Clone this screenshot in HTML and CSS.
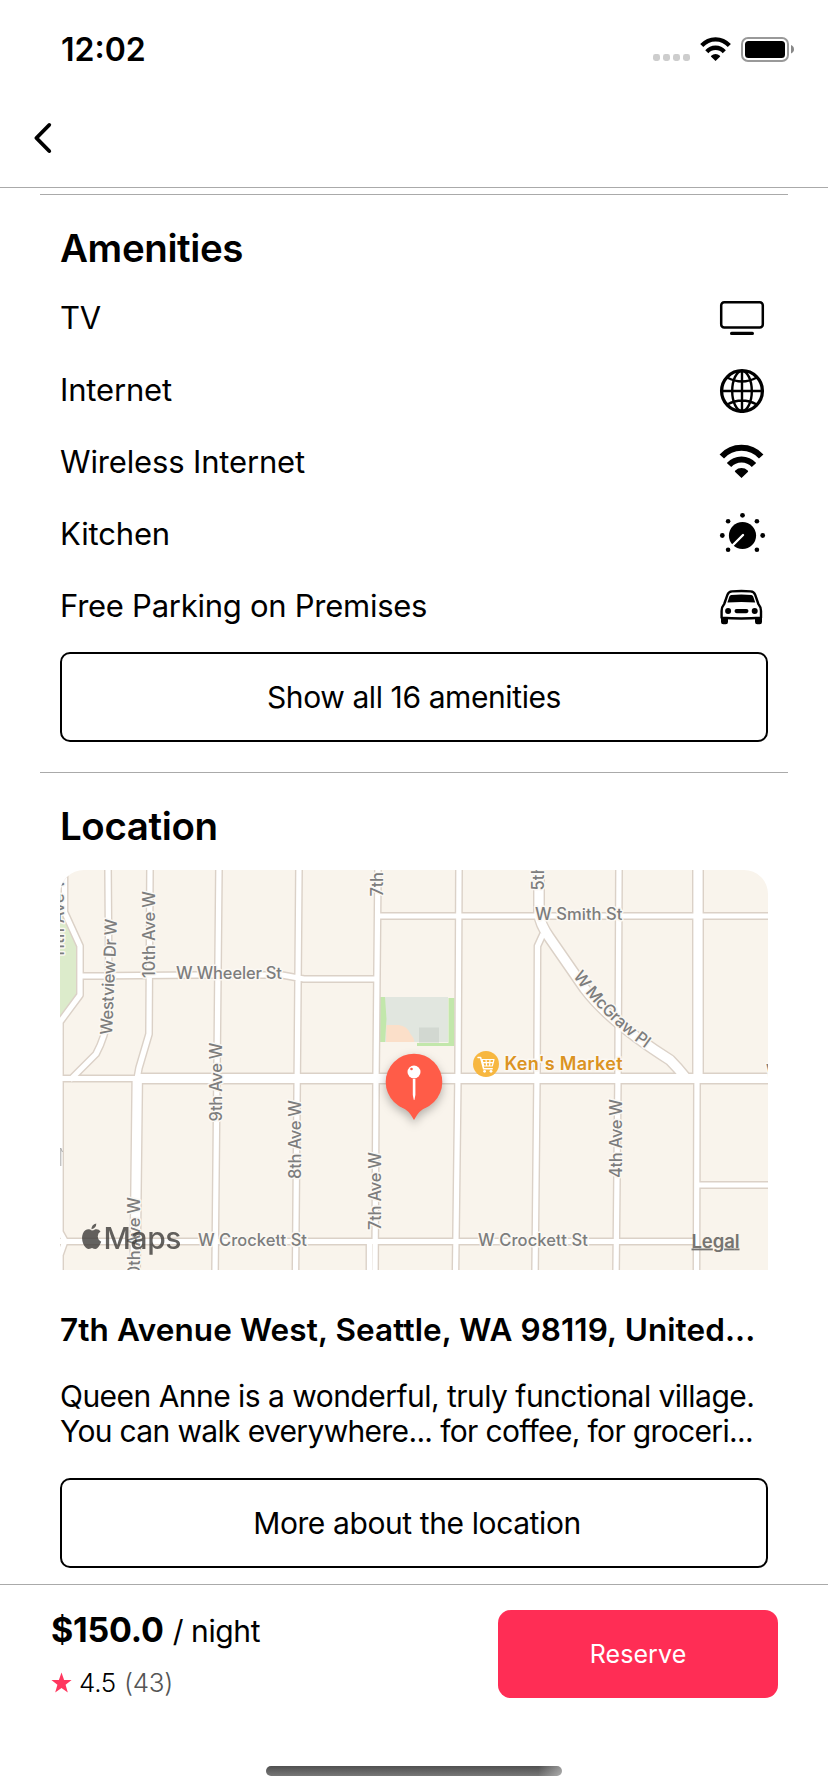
FILE: index.html
```html
<!DOCTYPE html>
<html lang="en">
<head>
<meta charset="utf-8">
<title>Listing</title>
<link rel="stylesheet" href="styles.css">
</head>
<body>
<div class="screen">
  <header class="header">
    <div class="status">
      <span class="clock">12:02</span>
      <svg class="status-icons" width="144" height="30" viewBox="652 34 144 30">
        <g fill="#cdcdcd">
          <rect x="653" y="54" width="7" height="7" rx="2.4"/><rect x="663" y="54" width="7" height="7" rx="2.4"/>
          <rect x="673" y="54" width="7" height="7" rx="2.4"/><rect x="683" y="54" width="7" height="7" rx="2.4"/>
        </g>
        <g transform="translate(699.1 31.6) scale(.7 .72)">
          <path d="M3.8 19.4A26.6 26.6 0 0 1 43.2 19.4M11 28A16.8 16.8 0 0 1 36 28" fill="none" stroke="#000" stroke-width="6"/>
          <path d="M23.5 41l-6.3-6.1q-.8-.8.1-1.5 2.6-2.4 6.2-2.4t6.2 2.4q.9.7.1 1.5z"/>
        </g>
        <rect x="742" y="38" width="46" height="23" rx="6" fill="none" stroke="#999" stroke-width="2"/>
        <rect x="745" y="41" width="40" height="17" rx="3.5"/>
        <path d="M791 45q3 1.2 3 4.3t-3 4.2z" fill="#888"/>
      </svg>
    </div>
    <nav class="nav">
      <svg width="20" height="32" viewBox="0 0 20 32"><path d="M17.2 3L4.4 16l12.8 13" fill="none" stroke="#000" stroke-width="3.9" stroke-linecap="round" stroke-linejoin="round"/></svg>
    </nav>
  </header>

  <main class="content">
    <section class="section">
      <h2 class="title">Amenities</h2>
      <ul class="amenities">
        <li class="amenity"><span>TV</span>
          <svg class="icon" viewBox="0 0 48 48"><rect x="3.2" y="9.2" width="41.6" height="25.4" rx="3" fill="none" stroke="#000" stroke-width="2.5"/><rect x="12" y="38.8" width="24" height="3.2" rx="1.6"/></svg></li>
        <li class="amenity"><span>Internet</span>
          <svg class="icon" viewBox="0 0 48 48"><g fill="none" stroke="#000" stroke-width="2.400"><circle cx="24" cy="26" r="20.4" stroke-width="3.300"/><ellipse cx="24" cy="26" rx="9.8" ry="20"/><path d="M24 6v40M4 26h40M9.2 12.5Q24 20.5 38.8 12.5M9.2 39.5Q24 31.5 38.8 39.5"/></g></svg></li>
        <li class="amenity"><span>Wireless Internet</span>
          <svg class="icon" viewBox="0 0 48 48"><path d="M3.8 19.4A26.6 26.6 0 0 1 43.2 19.4M11 28A16.8 16.8 0 0 1 36 28" fill="none" stroke="#000" stroke-width="6"/><path d="M23.5 41l-6.3-6.1q-.8-.8.1-1.5 2.6-2.4 6.2-2.4t6.2 2.4q.9.7.1 1.5z"/></svg></li>
        <li class="amenity"><span>Kitchen</span>
          <svg class="icon" viewBox="0 0 48 48"><circle cx="24.5" cy="26.5" r="13.6"/><path d="M25 26L14 37" stroke="#fff" stroke-width="2.4" stroke-linecap="round"/><circle cx="24.5" cy="6.3" r="2.4"/><circle cx="10.1" cy="12.3" r="2.3"/><circle cx="38.9" cy="12.3" r="2.3"/><circle cx="4.3" cy="26.5" r="2.4"/><circle cx="44.7" cy="26.5" r="2.4"/><circle cx="10.1" cy="40.8" r="2.3"/><circle cx="38.9" cy="40.8" r="2.3"/></svg></li>
        <li class="amenity"><span class="parking">Free Parking on Premises</span>
          <svg class="icon" viewBox="0 0 48 48"><path d="M3.6 36.8V30q0-4 2.6-7l3.2-9.2q1.1-3.2 4.6-3.4 9.5-.7 18.6 0 3.5.2 4.6 3.4l3.2 9.2q2.6 3 2.6 7v6.8q-19.7 1.4-39.4 0z" fill="none" stroke="#000" stroke-width="2.4" stroke-linejoin="round"/><path d="M13.3 14q10-1 20 0 1.4.1 1.9 1.5l2 6q-13.9-1-27.8 0l2-6q.5-1.4 1.9-1.5z"/><circle cx="10.1" cy="30" r="3"/><circle cx="36.7" cy="30" r="3"/><rect x="16.5" y="27.9" width="14" height="4.3" rx="2.1"/><path d="M3 36h7v5q0 2.3-2.3 2.3H5.3Q3 43.3 3 41zM37 36h7v5q0 2.3-2.3 2.3h-2.4q-2.3 0-2.3-2.3z"/></svg></li>
      </ul>
      <button class="outline-button">Show all 16 amenities</button>
    </section>

    <section class="section">
      <h2 class="title">Location</h2>
      <svg class="map" width="708" height="400" viewBox="60 870 708 400">
        <defs>
          <g id="roads" fill="none" stroke-linejoin="round">
            <path d="M64.5 865V912L80 946V995L60 1022M80 976L200 975 282 975 304 979H377M108 865L109 1000Q109 1030 96 1054L70 1080M150 865L149 1034 139 1068 137 1079M219 865L215 1275M299 865L295.5 1275M378 865L376 1078 375 1275M369.5 1242V1275M459 865L458 1075 455.5 1275M543 934L537.5 946 537 1075 535 1275M619 865L618 1075 616 1275M697 1078L696.5 1275M378 916H775M60 1078.5H140M60 1241.5H697M697 1185H775M60 1020V1232L65 1241 60 1255V1275"/>
          </g>
          <g id="avenues" fill="none" stroke-linejoin="round">
            <path d="M137.3 1078L135 1275M138 1078.5H775M539 865V914Q540 924 549 937L585 989Q610 1022 670 1060 678 1068 686 1078M698 865V1078"/>
          </g>
          <path id="mcgraw" d="M573 976Q602 1018 649 1051"/>
        </defs>
        <rect x="60" y="870" width="708" height="400" fill="#f9f4ec"/>
        <path d="M60 905L76 945V995L60 1016z" fill="#dcebcb"/>
        <rect x="380" y="997" width="68" height="45" fill="#e1e6df"/>
        <path d="M380 997h5l1.5 22-1.5 23h-5zM448.5 998h6v48H417v-3h31.5z" fill="#c2e7ab"/>
        <path d="M386.5 1025h12q9 1 12 9 3 3 4 8h-28.5z" fill="#fbdfc9"/>
        <rect x="419" y="1027.5" width="20" height="15" fill="#d2d8d1"/>
        <use href="#roads" stroke="#dbd1c7" stroke-width="8"/>
        <use href="#avenues" stroke="#dbd1c7" stroke-width="12"/>
        <use href="#roads" stroke="#fff" stroke-width="5.2"/>
        <use href="#avenues" stroke="#fff" stroke-width="9.2"/>

        <g class="street">
          <text x="176" y="979" textLength="106">W Wheeler St</text>
          <text x="535" y="920" textLength="87.5">W Smith St</text>
          <text x="198" y="1246" textLength="109">W Crockett St</text>
          <text x="478" y="1246" textLength="110">W Crockett St</text>
          <text x="766" y="1077">W</text>
          <text transform="translate(64 958) rotate(-90)" textLength="86">11th Ave W</text>
          <text transform="translate(112 1035) rotate(-87.5)" textLength="116">Westview Dr W</text>
          <text transform="translate(155 978) rotate(-90)" textLength="87">10th Ave W</text>
          <text transform="translate(221.5 1121.5) rotate(-90)" textLength="79">9th Ave W</text>
          <text transform="translate(300.5 1179) rotate(-90)" textLength="79">8th Ave W</text>
          <text transform="translate(380.5 1230) rotate(-90)" textLength="78">7th Ave W</text>
          <text transform="translate(383 896.5) rotate(-90)" textLength="78">7th Ave W</text>
          <text transform="translate(543.5 890.5) rotate(-90)" textLength="82">5th Ave W</text>
          <text transform="translate(621.5 1178) rotate(-90)" textLength="79">4th Ave W</text>
          <text transform="translate(140 1283) rotate(-90)" textLength="86">10th Ave W</text>
          <text><textPath href="#mcgraw" textLength="103">W McGraw Pl</textPath></text>
        </g>
        <path d="M60.8 1148V1166M60.5 1148l2 4" stroke="#aaa" fill="none"/>

        <circle cx="486" cy="1064" r="13" fill="#f7b740"/>
        <g fill="none" stroke="#fff" stroke-width="1.5" stroke-linecap="round" stroke-linejoin="round">
          <path d="M478 1057.5h2.6l3 11.2h8.6"/>
          <path d="M482 1059.5h12l-1.7 6.5h-8.6zM482.8 1062.6h10.6M486 1059.5l.6 6.5M490 1059.5l-.4 6.5" stroke-width="1.2"/>
        </g>
        <circle cx="484.6" cy="1071.3" r="1.4" fill="#fff"/><circle cx="491" cy="1071.3" r="1.4" fill="#fff"/>
        <text class="poi" x="504.500" y="1070" textLength="118">Ken's Market</text>

        <g class="brand">
          <path d="M91.8 1230.500q1.700 0 3.500-1.200 3.300-.8 5.200 2.300-3 1.800-2.700 5.200.4 3.600 3.400 4.900-2.800 7-5.800 7.300-1.300.1-3.400-1-2.200 1-3.700 1-2.700-.3-5-5-2.300-5.500-.4-10.600 2.200-4.500 6.300-4.100 1.600.5 2.600 1.200zM91.400 1229.300q0-4.700 4.900-5.900.1 4.800-4.900 5.900z"/>
          <text x="103.500" y="1249" textLength="78">Maps</text>
        </g>
        <text class="legal" x="691.500" y="1247.500" textLength="48">Legal</text>

        <g class="pin">
          <path d="M400 1106Q409 1110 414 1120 419 1110 428 1106z"/>
          <circle cx="414" cy="1082" r="28.3"/>
        </g>
        <circle cx="414" cy="1072" r="6.5" fill="#fff"/>
        <circle cx="411.5" cy="1069" r="1.3" fill="#ff5c48"/>
        <path d="M412.8 1079h2.6v16l-1 5h-.6l-1-5z" fill="#fff"/>
      </svg>
      <h3 class="address">7th Avenue West, Seattle, WA 98119, United...</h3>
      <p class="about"><span>Queen Anne is a wonderful, truly functional village.</span><br><span class="about-last">You can walk everywhere... for coffee, for groceri...</span></p>
      <button class="outline-button more">More about the location</button>
    </section>
  </main>

  <footer class="footer">
    <div class="booking">
      <div>
        <div class="price"><strong>$150.0</strong><span>/ night</span></div>
        <div class="rating">
          <svg width="21" height="22" viewBox="0 0 21 22"><path d="M10.5.5l2.600 7.400 7.500.1-6 4.700 2.200 7.900-6.300-4.600-6.300 4.600 2.200-7.900-6-4.700 7.500-.1z" fill="#ff375f"/></svg>
          <span class="score">4.5</span><span class="count">(43)</span>
        </div>
      </div>
      <button class="reserve">Reserve</button>
    </div>
    <div class="home-indicator"></div>
  </footer>
</div>
</body>
</html>
```
FILE: styles.css
```css
* { box-sizing: border-box; }
body { margin: 0; background: #fff; color: #000; font-family: Inter, "Noto Sans", sans-serif; }
h2, h3, p, ul { margin: 0; padding: 0; }
button { font-family: inherit; cursor: pointer; }
svg { display: block; }

.screen { width: 828px; height: 1792px; display: flex; flex-direction: column; overflow: hidden; }

.header { height: 188px; border-bottom: 1px solid #aaa; }
.status { display: flex; justify-content: space-between; padding: 30px 32px 0 61px; height: 106px; }
.clock { font-size: 32px; font-weight: 600; line-height: 40px; }
.status-icons { margin-top: 4px; }
.nav { padding: 16px 0 0 32px; }

.content { height: 1396px; padding: 6px 40px 0; }
.section { border-top: 1px solid #aaa; padding: 30px 20px; }
.title { font-size: 38.5px; line-height: 46px; font-weight: 600; letter-spacing: -0.4px; }
.amenities { list-style: none; padding: 10px 0 11px; }
.amenity { height: 72px; display: flex; align-items: center; justify-content: space-between; padding-right: 2px; font-size: 31px; letter-spacing: -0.15px; }
.parking { letter-spacing: -0.26px; }
.icon { width: 48px; height: 48px; }

.outline-button { display: block; width: 100%; height: 90px; padding: 0; border: 2px solid #000; border-radius: 10px; background: #fff; color: #000; font-size: 30px; letter-spacing: -0.4px; }
.more { padding-left: 6px; }

.map { margin-top: 21px; border-radius: 24px 24px 0 0; }
.street { font-size: 16.6px; font-weight: 450; fill: #7d7d7d; stroke: #fbf8f3; stroke-width: 3px; stroke-linejoin: round; paint-order: stroke; }
.poi { font-size: 18px; font-weight: 600; fill: #db9322; stroke: #fbf8f3; stroke-width: 3px; paint-order: stroke; }
.brand { fill: #3d3b39; opacity: .8; font-size: 30px; font-weight: 500; }
.legal { fill: #767471; font-size: 18.5px; font-weight: 600; text-decoration: underline; }
.pin { fill: #ff5c48; filter: drop-shadow(0 4px 5px rgba(0, 0, 0, .28)); }

.address { margin-top: 40px; font-size: 31.5px; line-height: 40px; font-weight: 600; white-space: nowrap; letter-spacing: 0.09px; }
.about { margin: 29px 0; font-size: 30px; line-height: 35px; white-space: nowrap; letter-spacing: -0.53px; }
.about-last { letter-spacing: -0.66px; }

.footer { flex: 1; border-top: 1px solid #aaa; background: #fff; }
.booking { display: flex; justify-content: space-between; align-items: flex-start; padding: 25px 50px 0 51px; height: 181px; }
.price { display: flex; align-items: baseline; gap: 9px; line-height: 40px; font-size: 30px; letter-spacing: -0.4px; }
.price strong { font-size: 34px; font-weight: 700; letter-spacing: -0.2px; }
.rating { display: flex; align-items: center; margin-top: 15px; font-size: 26px; font-weight: 300; line-height: 34px; letter-spacing: -0.3px; }
.score { margin-left: 7px; }
.count { margin-left: 8px; color: #555; }
.reserve { width: 280px; height: 88px; border: 0; border-radius: 13px; background: #ff2d55; color: #fff; font-size: 25px; letter-spacing: .1px; }
.home-indicator { width: 296px; height: 10px; margin: 0 auto; border-radius: 5px; background: linear-gradient(90deg, rgba(255, 255, 255, 0) 92%, rgba(255, 255, 255, .4)), linear-gradient(#505050, #777); }
```
